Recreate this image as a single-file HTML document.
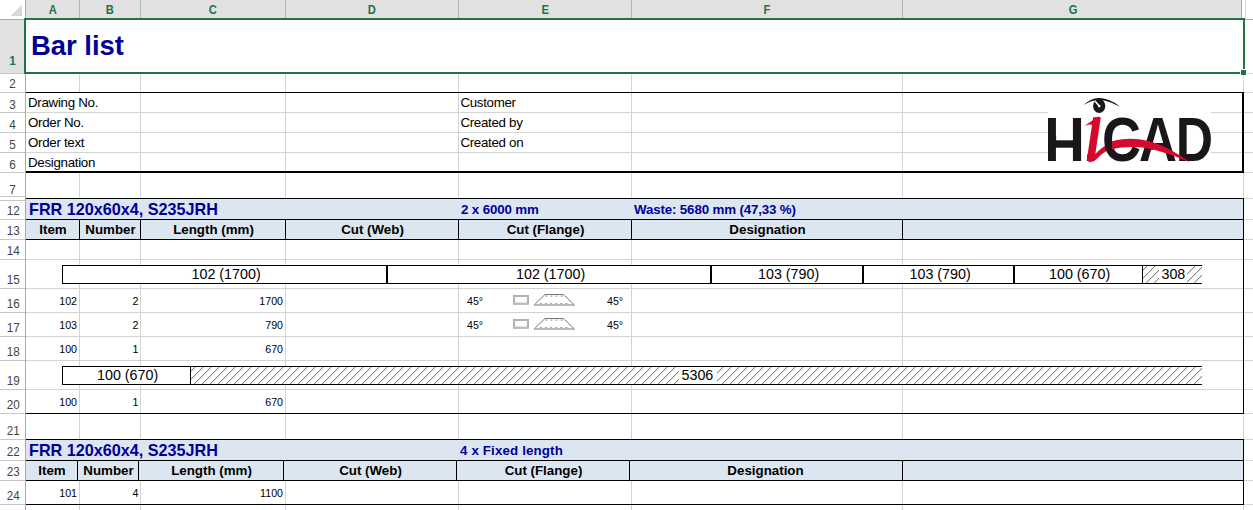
<!DOCTYPE html><html><head><meta charset="utf-8"><title>Bar list</title><style>
html,body{margin:0;padding:0;background:#fff;}
#p{position:relative;width:1253px;height:510px;overflow:hidden;background:#fff;font-family:"Liberation Sans",sans-serif;}
#p>div,#p>svg{position:absolute;}
.t{white-space:nowrap;color:#000;overflow:visible;}
.c{text-align:center;}
.r{text-align:right;}
.ch{font-size:13px;font-weight:700;color:#217346;text-align:center;}
.rh{font-size:13px;color:#444;text-align:center;}
.ch span{display:inline-block;transform:scaleX(0.86);}
.rh span{display:inline-block;transform:scaleX(0.9);}
.rh.sel{color:#217346;font-weight:700;}
.title{font-size:27.4px;font-weight:700;color:#000099;}
.n10{font-size:13.33px;letter-spacing:-0.3px;}
.n105{font-size:14.3px;}
.n8{font-size:10.67px;}
.b10{font-size:13.33px;font-weight:700;}
.h11{font-size:16.2px;font-weight:700;color:#000099;}
.h10{font-size:13.33px;letter-spacing:-0.15px;font-weight:700;color:#000099;}
</style></head><body><div id="p">
<div style="left:26px;top:0px;width:1216px;height:18px;background:#e1e1e1;"></div>
<div style="left:0px;top:20px;width:24px;height:53px;background:#e1e1e1;"></div>
<svg style="left:0;top:0" width="26" height="19"><polygon points="22,4.5 22,16 10.5,16" fill="#d9d9d9"/></svg>
<div style="left:25px;top:0px;width:1px;height:18px;background:#ababab;"></div>
<div style="left:79px;top:0px;width:1px;height:18px;background:#b4b4b4;"></div>
<div style="left:140px;top:0px;width:1px;height:18px;background:#b4b4b4;"></div>
<div style="left:285px;top:0px;width:1px;height:18px;background:#b4b4b4;"></div>
<div style="left:458px;top:0px;width:1px;height:18px;background:#b4b4b4;"></div>
<div style="left:631px;top:0px;width:1px;height:18px;background:#b4b4b4;"></div>
<div style="left:902px;top:0px;width:1px;height:18px;background:#b4b4b4;"></div>
<div style="left:1241px;top:0px;width:1px;height:18px;background:#ababab;"></div>
<div style="left:0px;top:19px;width:25px;height:1px;background:#ababab;"></div>
<div style="left:1245px;top:19px;width:8px;height:1px;background:#ababab;"></div>
<div style="left:1245px;top:0px;width:1px;height:19px;background:#dadada;"></div>
<div style="left:25px;top:20px;width:1px;height:490px;background:#ababab;"></div>
<div class="t ch" style="left:26px;top:1px;width:53px;height:18px;line-height:18px"><span>A</span></div>
<div class="t ch" style="left:80px;top:1px;width:60px;height:18px;line-height:18px"><span>B</span></div>
<div class="t ch" style="left:141px;top:1px;width:144px;height:18px;line-height:18px"><span>C</span></div>
<div class="t ch" style="left:286px;top:1px;width:172px;height:18px;line-height:18px"><span>D</span></div>
<div class="t ch" style="left:459px;top:1px;width:172px;height:18px;line-height:18px"><span>E</span></div>
<div class="t ch" style="left:632px;top:1px;width:270px;height:18px;line-height:18px"><span>F</span></div>
<div class="t ch" style="left:903px;top:1px;width:340px;height:18px;line-height:18px"><span>G</span></div>
<div style="left:0px;top:73px;width:25px;height:1px;background:#c6c6c6;"></div>
<div style="left:0px;top:92px;width:25px;height:1px;background:#c6c6c6;"></div>
<div style="left:0px;top:112px;width:25px;height:1px;background:#c6c6c6;"></div>
<div style="left:0px;top:132px;width:25px;height:1px;background:#c6c6c6;"></div>
<div style="left:0px;top:152px;width:25px;height:1px;background:#c6c6c6;"></div>
<div style="left:0px;top:172px;width:25px;height:1px;background:#c6c6c6;"></div>
<div style="left:0px;top:196px;width:25px;height:1px;background:#c6c6c6;"></div>
<div style="left:0px;top:219px;width:25px;height:1px;background:#c6c6c6;"></div>
<div style="left:0px;top:239px;width:25px;height:1px;background:#c6c6c6;"></div>
<div style="left:0px;top:259px;width:25px;height:1px;background:#c6c6c6;"></div>
<div style="left:0px;top:288px;width:25px;height:1px;background:#c6c6c6;"></div>
<div style="left:0px;top:312px;width:25px;height:1px;background:#c6c6c6;"></div>
<div style="left:0px;top:336px;width:25px;height:1px;background:#c6c6c6;"></div>
<div style="left:0px;top:360px;width:25px;height:1px;background:#c6c6c6;"></div>
<div style="left:0px;top:389px;width:25px;height:1px;background:#c6c6c6;"></div>
<div style="left:0px;top:413px;width:25px;height:1px;background:#c6c6c6;"></div>
<div style="left:0px;top:439px;width:25px;height:1px;background:#c6c6c6;"></div>
<div style="left:0px;top:460px;width:25px;height:1px;background:#c6c6c6;"></div>
<div style="left:0px;top:480px;width:25px;height:1px;background:#c6c6c6;"></div>
<div style="left:0px;top:504px;width:25px;height:1px;background:#c6c6c6;"></div>
<div style="left:0px;top:200px;width:25px;height:1px;background:#c6c6c6;"></div>
<div class="t rh sel" style="left:0;top:51.5px;width:26px;height:17px;line-height:17px"><span>1</span></div>
<div class="t rh" style="left:0;top:75px;width:26px;height:17px;line-height:17px"><span>2</span></div>
<div class="t rh" style="left:0;top:96px;width:26px;height:17px;line-height:17px"><span>3</span></div>
<div class="t rh" style="left:0;top:116px;width:26px;height:17px;line-height:17px"><span>4</span></div>
<div class="t rh" style="left:0;top:136px;width:26px;height:17px;line-height:17px"><span>5</span></div>
<div class="t rh" style="left:0;top:156px;width:26px;height:17px;line-height:17px"><span>6</span></div>
<div class="t rh" style="left:0;top:181px;width:26px;height:17px;line-height:17px"><span>7</span></div>
<div class="t rh" style="left:0;top:202px;width:26px;height:17px;line-height:17px"><span>12</span></div>
<div class="t rh" style="left:0;top:222px;width:26px;height:17px;line-height:17px"><span>13</span></div>
<div class="t rh" style="left:0;top:242px;width:26px;height:17px;line-height:17px"><span>14</span></div>
<div class="t rh" style="left:0;top:271px;width:26px;height:17px;line-height:17px"><span>15</span></div>
<div class="t rh" style="left:0;top:295px;width:26px;height:17px;line-height:17px"><span>16</span></div>
<div class="t rh" style="left:0;top:319px;width:26px;height:17px;line-height:17px"><span>17</span></div>
<div class="t rh" style="left:0;top:343px;width:26px;height:17px;line-height:17px"><span>18</span></div>
<div class="t rh" style="left:0;top:372px;width:26px;height:17px;line-height:17px"><span>19</span></div>
<div class="t rh" style="left:0;top:396px;width:26px;height:17px;line-height:17px"><span>20</span></div>
<div class="t rh" style="left:0;top:422px;width:26px;height:17px;line-height:17px"><span>21</span></div>
<div class="t rh" style="left:0;top:443px;width:26px;height:17px;line-height:17px"><span>22</span></div>
<div class="t rh" style="left:0;top:463px;width:26px;height:17px;line-height:17px"><span>23</span></div>
<div class="t rh" style="left:0;top:487px;width:26px;height:17px;line-height:17px"><span>24</span></div>
<div style="left:79px;top:73px;width:1px;height:20px;background:#d4d4d4;"></div>
<div style="left:79px;top:173px;width:1px;height:337px;background:#d4d4d4;"></div>
<div style="left:140px;top:73px;width:1px;height:437px;background:#d4d4d4;"></div>
<div style="left:285px;top:73px;width:1px;height:437px;background:#d4d4d4;"></div>
<div style="left:458px;top:73px;width:1px;height:437px;background:#d4d4d4;"></div>
<div style="left:631px;top:73px;width:1px;height:437px;background:#d4d4d4;"></div>
<div style="left:902px;top:73px;width:1px;height:437px;background:#d4d4d4;"></div>
<div style="left:1243px;top:73px;width:1px;height:437px;background:#d4d4d4;"></div>
<div style="left:26px;top:73px;width:1227px;height:1px;background:#d4d4d4;"></div>
<div style="left:26px;top:92px;width:1227px;height:1px;background:#d4d4d4;"></div>
<div style="left:26px;top:112px;width:1227px;height:1px;background:#d4d4d4;"></div>
<div style="left:26px;top:132px;width:1227px;height:1px;background:#d4d4d4;"></div>
<div style="left:26px;top:152px;width:1227px;height:1px;background:#d4d4d4;"></div>
<div style="left:26px;top:172px;width:1227px;height:1px;background:#d4d4d4;"></div>
<div style="left:26px;top:198px;width:1227px;height:1px;background:#d4d4d4;"></div>
<div style="left:26px;top:219px;width:1227px;height:1px;background:#d4d4d4;"></div>
<div style="left:26px;top:239px;width:1227px;height:1px;background:#d4d4d4;"></div>
<div style="left:26px;top:259px;width:1227px;height:1px;background:#d4d4d4;"></div>
<div style="left:26px;top:288px;width:1227px;height:1px;background:#d4d4d4;"></div>
<div style="left:26px;top:312px;width:1227px;height:1px;background:#d4d4d4;"></div>
<div style="left:26px;top:336px;width:1227px;height:1px;background:#d4d4d4;"></div>
<div style="left:26px;top:360px;width:1227px;height:1px;background:#d4d4d4;"></div>
<div style="left:26px;top:389px;width:1227px;height:1px;background:#d4d4d4;"></div>
<div style="left:26px;top:413px;width:1227px;height:1px;background:#d4d4d4;"></div>
<div style="left:26px;top:439px;width:1227px;height:1px;background:#d4d4d4;"></div>
<div style="left:26px;top:460px;width:1227px;height:1px;background:#d4d4d4;"></div>
<div style="left:26px;top:480px;width:1227px;height:1px;background:#d4d4d4;"></div>
<div style="left:26px;top:504px;width:1227px;height:1px;background:#d4d4d4;"></div>
<div style="left:26px;top:199px;width:1218px;height:41px;background:#dce6f1;"></div>
<div style="left:26px;top:440px;width:1218px;height:41px;background:#dce6f1;"></div>
<div style="left:26px;top:92px;width:1218px;height:1px;background:#000;"></div>
<div style="left:26px;top:171px;width:1218px;height:2px;background:#000;"></div>
<div style="left:1242px;top:92px;width:2px;height:81px;background:#000;"></div>
<div style="left:26px;top:198px;width:1218px;height:1px;background:#000;"></div>
<div style="left:26px;top:219px;width:1218px;height:1px;background:#000;"></div>
<div style="left:26px;top:239px;width:1218px;height:1px;background:#000;"></div>
<div style="left:26px;top:413px;width:1218px;height:1px;background:#000;"></div>
<div style="left:1243px;top:198px;width:1px;height:216px;background:#000;"></div>
<div style="left:79px;top:220px;width:1px;height:19px;background:#000;"></div>
<div style="left:140px;top:220px;width:1px;height:19px;background:#000;"></div>
<div style="left:285px;top:220px;width:1px;height:19px;background:#000;"></div>
<div style="left:458px;top:220px;width:1px;height:19px;background:#000;"></div>
<div style="left:631px;top:220px;width:1px;height:19px;background:#000;"></div>
<div style="left:902px;top:220px;width:1px;height:19px;background:#000;"></div>
<div style="left:26px;top:439px;width:1218px;height:1px;background:#000;"></div>
<div style="left:26px;top:460px;width:1218px;height:1px;background:#000;"></div>
<div style="left:26px;top:480px;width:1218px;height:1px;background:#000;"></div>
<div style="left:26px;top:504px;width:1218px;height:1px;background:#000;"></div>
<div style="left:1243px;top:439px;width:1px;height:66px;background:#000;"></div>
<div style="left:77px;top:461px;width:1px;height:19px;background:#000;"></div>
<div style="left:138px;top:461px;width:1px;height:19px;background:#000;"></div>
<div style="left:283px;top:461px;width:1px;height:19px;background:#000;"></div>
<div style="left:456px;top:461px;width:1px;height:19px;background:#000;"></div>
<div style="left:629px;top:461px;width:1px;height:19px;background:#000;"></div>
<div style="left:902px;top:461px;width:1px;height:19px;background:#000;"></div>
<div class="t title" style="left:31px;top:18.7px;width:400px;height:53px;line-height:53px;">Bar list</div>
<div class="t n10" style="left:28px;top:93px;width:200px;height:19px;line-height:19px;">Drawing No.</div>
<div class="t n10" style="left:28px;top:113px;width:200px;height:19px;line-height:19px;">Order No.</div>
<div class="t n10" style="left:28px;top:133px;width:200px;height:19px;line-height:19px;">Order text</div>
<div class="t n10" style="left:28px;top:153px;width:200px;height:19px;line-height:19px;">Designation</div>
<div class="t n10" style="left:460.4px;top:93px;width:200px;height:19px;line-height:19px;">Customer</div>
<div class="t n10" style="left:460.4px;top:113px;width:200px;height:19px;line-height:19px;">Created by</div>
<div class="t n10" style="left:460.4px;top:133px;width:200px;height:19px;line-height:19px;">Created on</div>
<div class="t h11" style="left:29px;top:198.7px;width:400px;height:20px;line-height:20px;">FRR 120x60x4, S235JRH</div>
<div class="t h10" style="left:461px;top:200px;width:170px;height:20px;line-height:20px;">2 x 6000 mm</div>
<div class="t h10" style="left:634px;top:200px;width:268px;height:20px;line-height:20px;">Waste: 5680 mm (47,33 %)</div>
<div class="t b10 c" style="left:26.5px;top:219.7px;width:53px;height:19px;line-height:19px;">Item</div>
<div class="t b10 c" style="left:80.5px;top:219.7px;width:60px;height:19px;line-height:19px;">Number</div>
<div class="t b10 c" style="left:141.5px;top:219.7px;width:144px;height:19px;line-height:19px;">Length (mm)</div>
<div class="t b10 c" style="left:286.5px;top:219.7px;width:172px;height:19px;line-height:19px;">Cut (Web)</div>
<div class="t b10 c" style="left:459.5px;top:219.7px;width:172px;height:19px;line-height:19px;">Cut (Flange)</div>
<div class="t b10 c" style="left:632.5px;top:219.7px;width:270px;height:19px;line-height:19px;">Designation</div>
<div class="t h11" style="left:29px;top:439.7px;width:400px;height:20px;line-height:20px;">FRR 120x60x4, S235JRH</div>
<div class="t h10" style="left:460px;top:441px;width:170px;height:20px;line-height:20px;letter-spacing:0.14px;">4 x Fixed length</div>
<div class="t b10 c" style="left:26.5px;top:460.7px;width:51px;height:19px;line-height:19px;">Item</div>
<div class="t b10 c" style="left:78.5px;top:460.7px;width:60px;height:19px;line-height:19px;">Number</div>
<div class="t b10 c" style="left:139.5px;top:460.7px;width:144px;height:19px;line-height:19px;">Length (mm)</div>
<div class="t b10 c" style="left:284.5px;top:460.7px;width:172px;height:19px;line-height:19px;">Cut (Web)</div>
<div class="t b10 c" style="left:457.5px;top:460.7px;width:172px;height:19px;line-height:19px;">Cut (Flange)</div>
<div class="t b10 c" style="left:630.5px;top:460.7px;width:270px;height:19px;line-height:19px;">Designation</div>
<div class="t n8 r" style="left:26px;top:290px;width:51px;height:23px;line-height:23px;">102</div>
<div class="t n8 r" style="left:80px;top:290px;width:58.5px;height:23px;line-height:23px;">2</div>
<div class="t n8 r" style="left:141px;top:290px;width:142px;height:23px;line-height:23px;">1700</div>
<div class="t n8 r" style="left:26px;top:314px;width:51px;height:23px;line-height:23px;">103</div>
<div class="t n8 r" style="left:80px;top:314px;width:58.5px;height:23px;line-height:23px;">2</div>
<div class="t n8 r" style="left:141px;top:314px;width:142px;height:23px;line-height:23px;">790</div>
<div class="t n8 r" style="left:26px;top:338px;width:51px;height:23px;line-height:23px;">100</div>
<div class="t n8 r" style="left:80px;top:338px;width:58.5px;height:23px;line-height:23px;">1</div>
<div class="t n8 r" style="left:141px;top:338px;width:142px;height:23px;line-height:23px;">670</div>
<div class="t n8 r" style="left:26px;top:391px;width:51px;height:23px;line-height:23px;">100</div>
<div class="t n8 r" style="left:80px;top:391px;width:58.5px;height:23px;line-height:23px;">1</div>
<div class="t n8 r" style="left:141px;top:391px;width:142px;height:23px;line-height:23px;">670</div>
<div class="t n8 r" style="left:26px;top:482px;width:51px;height:23px;line-height:23px;">101</div>
<div class="t n8 r" style="left:80px;top:482px;width:58.5px;height:23px;line-height:23px;">4</div>
<div class="t n8 r" style="left:141px;top:482px;width:142px;height:23px;line-height:23px;">1100</div>
<div class="t n8" style="left:467px;top:289.5px;width:40px;height:23px;line-height:23px;">45°</div>
<div class="t n8" style="left:607px;top:289.5px;width:40px;height:23px;line-height:23px;">45°</div>
<svg style="left:505px;top:288px" width="80" height="24">
<rect x="9" y="8" width="13.9" height="7.7" fill="#fff" stroke="#a4a4a4" stroke-width="2"/>
<rect x="9" y="8" width="13.9" height="7.7" fill="none" stroke="#cfcfcf" stroke-width="0.6"/>
<polygon points="29.05,17.2 39.9,6.5 58.4,6.5 69.6,17.2" fill="#fff"/>
<path d="M29.05,17.2 L39.9,6.5 L58.4,6.5 L69.6,17.2" fill="none" stroke="#6a6a6a" stroke-width="0.9"/>
<line x1="29.05" y1="17" x2="69.6" y2="17" stroke="#a2a2a2" stroke-width="1.4"/>
<line x1="40.2" y1="8.2" x2="58.4" y2="8.2" stroke="#acacac" stroke-width="1.2" stroke-dasharray="2.2,2.9"/>
<line x1="34.8" y1="15.5" x2="64" y2="15.5" stroke="#a8a8a8" stroke-width="1" stroke-dasharray="2.2,2.9"/>
</svg>
<div class="t n8" style="left:467px;top:313.5px;width:40px;height:23px;line-height:23px;">45°</div>
<div class="t n8" style="left:607px;top:313.5px;width:40px;height:23px;line-height:23px;">45°</div>
<svg style="left:505px;top:312px" width="80" height="24">
<rect x="9" y="8" width="13.9" height="7.7" fill="#fff" stroke="#a4a4a4" stroke-width="2"/>
<rect x="9" y="8" width="13.9" height="7.7" fill="none" stroke="#cfcfcf" stroke-width="0.6"/>
<polygon points="29.05,17.2 39.9,6.5 58.4,6.5 69.6,17.2" fill="#fff"/>
<path d="M29.05,17.2 L39.9,6.5 L58.4,6.5 L69.6,17.2" fill="none" stroke="#6a6a6a" stroke-width="0.9"/>
<line x1="29.05" y1="17" x2="69.6" y2="17" stroke="#a2a2a2" stroke-width="1.4"/>
<line x1="40.2" y1="8.2" x2="58.4" y2="8.2" stroke="#acacac" stroke-width="1.2" stroke-dasharray="2.2,2.9"/>
<line x1="34.8" y1="15.5" x2="64" y2="15.5" stroke="#a8a8a8" stroke-width="1" stroke-dasharray="2.2,2.9"/>
</svg>
<svg style="left:62px;top:265px" width="1141" height="19"><defs><pattern id="h265" width="8" height="8" patternUnits="userSpaceOnUse" patternTransform="translate(6.2,0)"><path d="M-1,9 L9,-1 M-1,1 L1,-1 M7,9 L9,7" stroke="#5c5c5c" stroke-width="0.95" fill="none"/></pattern></defs><rect x="0" y="0" width="1140" height="19" fill="#fff"/><rect x="1080" y="1" width="60" height="17" fill="url(#h265)"/><rect x="1097" y="1" width="28" height="17" fill="#fff"/><rect x="0" y="0" width="1140" height="1" fill="#000"/><rect x="0" y="18" width="1140" height="1" fill="#000"/><rect x="0" y="0" width="1" height="19" fill="#000"/><rect x="324" y="0" width="2" height="19" fill="#000"/><rect x="648" y="0" width="2" height="19" fill="#000"/><rect x="800" y="0" width="2" height="19" fill="#000"/><rect x="951" y="0" width="2" height="19" fill="#000"/><rect x="1080" y="0" width="1" height="19" fill="#000"/></svg>
<div class="t n105 c" style="left:63.6px;top:265px;width:325px;height:19px;line-height:19px;">102 (1700)</div>
<div class="t n105 c" style="left:388.6px;top:265px;width:324px;height:19px;line-height:19px;">102 (1700)</div>
<div class="t n105 c" style="left:712.6px;top:265px;width:152px;height:19px;line-height:19px;">103 (790)</div>
<div class="t n105 c" style="left:864.6px;top:265px;width:151px;height:19px;line-height:19px;">103 (790)</div>
<div class="t n105 c" style="left:1015.6px;top:265px;width:128px;height:19px;line-height:19px;">100 (670)</div>
<div class="t n105 c" style="left:1159.4px;top:265px;width:28px;height:19px;line-height:19px;">308</div>
<svg style="left:62px;top:366px" width="1141" height="19"><defs><pattern id="h366" width="8" height="8" patternUnits="userSpaceOnUse" patternTransform="translate(6.2,0)"><path d="M-1,9 L9,-1 M-1,1 L1,-1 M7,9 L9,7" stroke="#5c5c5c" stroke-width="0.95" fill="none"/></pattern></defs><rect x="0" y="0" width="1140" height="19" fill="#fff"/><rect x="128" y="1" width="1012" height="17" fill="url(#h366)"/><rect x="617" y="1" width="38" height="17" fill="#fff"/><rect x="0" y="0" width="1140" height="1" fill="#000"/><rect x="0" y="18" width="1140" height="1" fill="#000"/><rect x="0" y="0" width="1" height="19" fill="#000"/><rect x="128" y="0" width="1" height="19" fill="#000"/></svg>
<div class="t n105 c" style="left:63.6px;top:366px;width:128px;height:19px;line-height:19px;">100 (670)</div>
<div class="t n105 c" style="left:678.4px;top:366px;width:38px;height:19px;line-height:19px;">5306</div>
<div style="left:24px;top:18px;width:1221px;height:2px;background:#217346;"></div>
<div style="left:24px;top:72px;width:1217px;height:2px;background:#217346;"></div>
<div style="left:24px;top:18px;width:2px;height:56px;background:#217346;"></div>
<div style="left:1243px;top:18px;width:2px;height:52px;background:#217346;"></div>
<div style="left:1240px;top:69px;width:7px;height:7px;background:#fff;"></div>
<div style="left:1241px;top:70px;width:5px;height:5px;background:#217346;"></div>
<svg style="left:1048px;top:93px" width="163" height="78" viewBox="1048 93 163 78">
<defs><clipPath id="ci"><rect x="1070" y="113" width="60" height="60"/></clipPath></defs>
<rect x="1048" y="93" width="163" height="78" fill="#fff"/>
<g font-family="'Liberation Sans',sans-serif" font-weight="700" fill="#1a171b" font-size="62.2">
<text transform="translate(1044,160.7) scale(0.91,1)">H</text>
</g>
<rect x="1056.1" y="135" width="16.8" height="5.3" fill="#fff"/>
<rect x="1055" y="142" width="19" height="5.7" fill="#1a171b"/>
<g clip-path="url(#ci)"><text transform="translate(1085.2,161) skewX(3.2) scale(1.05,1)" font-family="'Liberation Sans',sans-serif" font-style="italic" font-size="83" fill="#d5082d">i</text></g>
<path d="M1084.5,125.7 C1088.5,123 1093,120 1098.2,116.2 L1100.4,118.6 L1093,125 C1090,123.8 1087.3,124.6 1084.5,125.7 Z" fill="#d5082d"/>
<path d="M1087.4,154 C1086.8,158 1086.6,161.9 1090,162 C1093,162.1 1095.2,160.3 1097.5,158.2 C1102.5,153.6 1107,149.8 1114,148.6 L1114,141 C1106.5,143.6 1100.5,149 1094.3,154.8 Z" fill="#d5082d"/>
<g font-family="'Liberation Sans',sans-serif" font-weight="700" fill="#1a171b" font-size="62.2">
<text transform="translate(1101.9,160.7) scale(0.867,1)">C</text>
<text transform="translate(1139.1,160.7) scale(0.844,1)">A</text>
<text transform="translate(1175.7,160.7) scale(0.832,1)">D</text>
</g>
<polygon points="1150.6,161.2 1165.6,161.2 1161.9,146.5 1154.3,146.5" fill="#fff"/>
<path d="M1112,141.5 C1122,138 1136,138 1148,141 C1162,144.5 1176,152 1189.5,162 C1176,156.5 1162,151 1148,148.5 C1136,146.5 1122,146.5 1112,149.5 Z" fill="#d5082d"/>
<path d="M1083.6,105.1 C1088,101 1093,98.3 1098.6,98.1 C1106,97.9 1113.5,101.5 1120,106.6 C1113,103.2 1106,100 1098.6,99.9 C1093,99.9 1088,102.2 1083.6,105.1 Z" fill="#1a171b"/>
<ellipse cx="1099.2" cy="106" rx="6.1" ry="6.9" fill="#1a171b"/>
<path d="M1095.4,101.6 L1099.2,106" stroke="#fff" stroke-width="1.5" stroke-linecap="round" fill="none"/>
<circle cx="1099.2" cy="106.1" r="1.4" fill="#fff"/>
</svg>

</div></body></html>
